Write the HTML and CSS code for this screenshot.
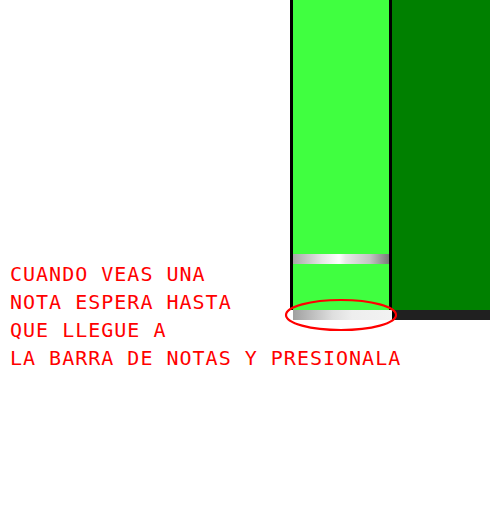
FILE: index.html
```html
<!DOCTYPE html>
<html>
<head>
<meta charset="utf-8">
<link rel="stylesheet" href="styles.css">
</head>
<body>
<div class="stage">
  <div class="track">
    <div class="lanes">
      <div class="lane lane-active">
        <div class="note"></div>
      </div>
      <div class="lane lane-idle"></div>
    </div>
    <div class="hitbar">
      <div class="hit hit-active"></div>
      <div class="hit hit-idle"></div>
    </div>
    <svg class="ring" width="116" height="34" viewBox="0 0 116 34">
      <ellipse cx="58" cy="17" rx="55" ry="15" fill="none" stroke="#ff0000" stroke-width="2.2"/>
    </svg>
  </div>
  <p class="hint">CUANDO VEAS UNA<br>NOTA ESPERA HASTA<br>QUE LLEGUE A<br>LA BARRA DE NOTAS Y PRESIONALA</p>
</div>
</body>
</html>
```
FILE: styles.css
```css
html, body {
  margin: 0;
  padding: 0;
  background: #ffffff;
}
.stage {
  display: grid;
  width: 490px;
  height: 510px;
  overflow: hidden;
}
.track, .hint {
  grid-area: 1 / 1;
}
.track {
  position: relative;
  justify-self: end;
  align-self: start;
  width: 200px;
  height: 320px;
  display: flex;
  flex-direction: column;
}
.lanes {
  display: flex;
  height: 310px;
}
.lane {
  height: 100%;
}
.lane-active {
  width: 96px;
  background: #40ff40;
  border-left: 3px solid #000;
  border-right: 3px solid #000;
  display: flex;
  flex-direction: column;
}
.lane-idle {
  flex: 1;
  background: #008000;
}
.note {
  margin-top: 254px;
  height: 10px;
  background: linear-gradient(to right, #a8a8a8 0%, #e6e6e6 30%, #ffffff 48%, #e8e8e8 55%, #c4c4c4 80%, #7a7a7a 100%);
}
.hitbar {
  display: flex;
  height: 10px;
}
.hit-active {
  width: 99px;
  margin-left: 3px;
  background: linear-gradient(to right, #a0a0a0 0%, #dedede 40%, #eeeeee 60%, #f2f2f2 100%);
}
.hit-idle {
  flex: 1;
  background: #202020;
  border-left: 3px solid #000;
}
.ring {
  position: absolute;
  left: -7px;
  top: 298px;
}
.hint {
  margin: 260px 0 0 10px;
  align-self: start;
  font-family: "DejaVu Sans Mono", monospace;
  font-size: 20px;
  letter-spacing: 1px;
  line-height: 28px;
  color: #ff0000;
  white-space: nowrap;
}
```
